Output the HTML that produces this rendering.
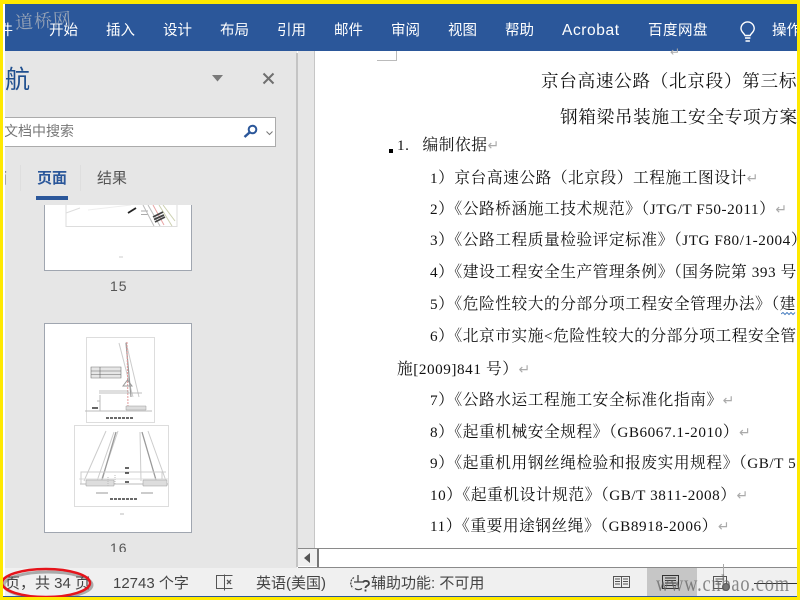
<!DOCTYPE html>
<html><head><meta charset="utf-8">
<style>
html,body{margin:0;padding:0;width:800px;height:600px;overflow:hidden;background:#fff}
body{position:relative;font-family:"Liberation Sans","Noto Sans CJK SC",sans-serif}
div,span.a{position:absolute}
.t{position:absolute;white-space:nowrap;line-height:20px}
.tab{color:#fff;font-size:14.5px;top:21px}
.d{font-family:"Liberation Serif","Noto Serif CJK SC",serif;font-size:15.7px;color:#111;letter-spacing:.55px;z-index:1}
.l{font-size:15.2px}
.r{color:#aaa;font-size:14px;font-family:"Liberation Sans",sans-serif;letter-spacing:0}
.s{font-size:15px;color:#444;top:574px}
</style></head><body>
<div style="left:0;top:0;width:800px;height:600px;background:#fff"></div>
<!-- ribbon -->
<div style="left:5px;top:4px;width:792px;height:47px;background:#2B579A"></div>
<!-- nav pane -->
<div style="left:5px;top:51px;width:292px;height:519px;background:#E6E6E6"></div>
<div style="left:296px;top:53px;width:2px;height:514px;background:#C4C4C4"></div>
<div style="left:298px;top:51px;width:17px;height:497px;background:#E6E6E6"></div>
<div style="left:314px;top:51px;width:1px;height:497px;background:#C6C6C6"></div>
<div style="left:298px;top:548px;width:499px;height:1px;background:#8a8a8a"></div>
<div style="left:298px;top:549px;width:499px;height:17px;background:#fff"></div>
<div style="left:298px;top:549px;width:19px;height:17px;background:#F0F0F0"></div>
<div style="left:317px;top:549px;width:2px;height:18px;background:#777"></div>
<div style="left:298px;top:567px;width:499px;height:1px;background:#8a8a8a"></div>
<svg style="position:absolute;left:304px;top:553px" width="8" height="10"><path d="M6 0V10L0 5Z" fill="#555"/></svg>

<!-- status -->
<div style="left:5px;top:568px;width:792px;height:28px;background:#F0F0F0"></div>
<div style="left:0;top:596px;width:800px;height:1px;background:#2B579A"></div>
<div style="left:647px;top:568px;width:50px;height:28px;background:#C6C6C6"></div>

<!-- yellow frame -->
<div style="left:0;top:0;width:800px;height:4px;background:#FFE900;z-index:9"></div>
<div style="left:0;top:0;width:3px;height:600px;background:#FFE900;z-index:9"></div>
<div style="left:797px;top:0;width:3px;height:600px;background:#FFE900;z-index:9"></div>
<div style="left:0;top:597px;width:800px;height:3px;background:#FFE900;z-index:9"></div>

<!-- tabs -->
<span class="t tab" style="left:-16px">文件</span>
<span class="t tab" style="left:49px">开始</span>
<span class="t tab" style="left:106px">插入</span>
<span class="t tab" style="left:163px">设计</span>
<span class="t tab" style="left:220px">布局</span>
<span class="t tab" style="left:277px">引用</span>
<span class="t tab" style="left:334px">邮件</span>
<span class="t tab" style="left:391px">审阅</span>
<span class="t tab" style="left:448px">视图</span>
<span class="t tab" style="left:505px">帮助</span>
<span class="t tab" style="left:562px;font-size:15.5px;letter-spacing:.6px">Acrobat</span>
<span class="t tab" style="left:648px;letter-spacing:.5px">百度网盘</span>
<span class="t tab" style="left:772px;width:25px;overflow:hidden">操作</span>
<svg style="position:absolute;left:739px;top:21px" width="18" height="22" fill="none" stroke="#fff" stroke-width="1.4"><path d="M6 14.5C5.500 12.5 2 11 2 7.500A6.600 6.600 0 0 1 15.200 7.500C15.200 11 11.800 12.500 11.200 14.500Z"/><path d="M6 17H11.400M6.500 20H10.900" stroke-width="1.600"/></svg>
<span class="t" style="left:15px;top:10px;font-size:18px;letter-spacing:1px;color:#95a2b6;font-family:'Noto Serif CJK SC',serif;transform:rotate(-4deg);z-index:3">道桥网</span>

<!-- nav heading -->
<span class="t" style="left:5px;top:68px;font-size:25px;line-height:25px;color:#1F4F8F">航</span>
<svg style="position:absolute;left:212px;top:75px" width="12" height="8"><path d="M0 0H11L5.500 6.500Z" fill="#7a7a7a"/></svg>
<svg style="position:absolute;left:262px;top:72px" width="14" height="14" stroke="#6f6f6f" stroke-width="2"><path d="M1.500 1.500L11.500 11.500M11.500 1.500L1.500 11.500"/></svg>

<!-- search -->
<div style="left:5px;top:117px;width:270px;height:28px;background:#fff;border:1px solid #ABABAB;border-left:0"></div>
<span class="t" style="left:5px;top:121px;width:70px;overflow:hidden;font-size:14px;color:#777"><span style="margin-left:-1px">文档中搜索</span></span>
<svg style="position:absolute;left:243px;top:123px" width="16" height="16" fill="none" stroke="#2B579A"><circle cx="9.500" cy="6.500" r="3.800" stroke-width="2"/><path d="M6.500 9.500L1.500 14" stroke-width="2.500"/></svg>
<svg style="position:absolute;left:266px;top:131px" width="7" height="5" fill="none" stroke="#777"><path d="M.5 .5L3.500 3.500L6.500 .5"/></svg>

<!-- nav tabs -->
<span class="t" style="left:-8px;top:169px;font-size:15px;color:#555;clip-path:inset(0 0 0 13px)">面</span>
<span class="t" style="left:37px;top:169px;font-size:15px;font-weight:bold;color:#2B579A">页面</span>
<span class="t" style="left:97px;top:169px;font-size:15px;color:#555">结果</span>
<div style="left:20px;top:165px;width:1px;height:26px;background:#dedede"></div>
<div style="left:80px;top:165px;width:1px;height:26px;background:#dedede"></div>
<div style="left:36px;top:196px;width:32px;height:4px;background:#2B579A"></div>

<!-- thumbnails -->
<svg style="position:absolute;left:44px;top:205px" width="148" height="66">
<rect x=".5" y="-3" width="147" height="68.500" fill="#fff" stroke="#A0A6B0"/>
<path d="M22 0V21.500H133V0" fill="none" stroke="#ddd"/>
<path d="M22 8L36 3" stroke="#ddd"/>
<path d="M44 5L87 0" stroke="#eee"/>
<path d="M84 8L92 3" stroke="#222" stroke-width="1.800"/>
<path d="M97 6H104M97 9.500H104" stroke="#aaa"/>
<path d="M99 0L110 21M104 0L116 21" stroke="#bbb" fill="none"/>
<path d="M109 0L120 20" stroke="#e8a5a5"/>
<path d="M115 0L128 21M119 0L131 16" stroke="#ccd0b0"/>
<path d="M109 12L119 7M110 14.500L120 10M111 17L121 12" stroke="#444" stroke-width="1.800"/>
<path d="M75 52H79" stroke="#ccc"/>
</svg>
<span class="t" style="left:110px;top:276px;font-size:14px;letter-spacing:1px;color:#555">15</span>
<svg style="position:absolute;left:44px;top:323px" width="148" height="210">
<rect x=".5" y=".5" width="147" height="209" fill="#fff" stroke="#A0A6B0"/>
<rect x="42.500" y="14.500" width="68" height="85" fill="none" stroke="#ddd"/>
<rect x="30.500" y="102.500" width="94" height="81" fill="none" stroke="#ddd"/>
<!-- crane 1 -->
<path d="M82 19L95 74M75 20L89 74" stroke="#ccc" fill="none"/>
<path d="M82 20L87 74" stroke="#999" stroke-width="1.200"/>
<path d="M83 19L84 85" stroke="#e39a9a" stroke-dasharray="2 1"/>
<path d="M47 44H77V55H47Z" fill="#e6e6e6" stroke="#777" stroke-width=".6"/>
<path d="M47 48H77M47 51.500H77M56 44V55" stroke="#666" stroke-width=".6"/>
<path d="M55 68H84V70H55M70 70H98" stroke="#aaa" stroke-width=".8" fill="none"/>
<path d="M79 63H88L83.500 57Z" fill="none" stroke="#999"/>
<path d="M41 88H108" stroke="#bbb"/>
<path d="M56 72V88M56 78H53" stroke="#bbb"/>
<path d="M82 83H102V87H82Z" fill="#ddd" stroke="#999" stroke-width=".5"/>
<path d="M48 85H54" stroke="#333" stroke-width="1.500"/>
<path d="M62 95H90" stroke="#555" stroke-width="1.800" stroke-dasharray="3 1"/>
<!-- crane 2 -->
<path d="M62 108L40 158M70 109L53 158M74 108L57 158" stroke="#ccc" fill="none"/>
<path d="M72 109L58 157" stroke="#999" stroke-width="1.300"/>
<path d="M98 109L112 157" stroke="#999" stroke-width="1.300"/>
<path d="M104 108L122 158M96 109L97 158" stroke="#ccc" fill="none"/>
<path d="M36 161H124" stroke="#bbb"/>
<path d="M35 156H124" stroke="#ddd"/>
<path d="M37 161V149H118V156M37 149H122" stroke="#ccc" fill="none"/>
<path d="M42 157H70V163H42Z" fill="#ddd" stroke="#999" stroke-width=".5"/>
<path d="M99 157H123V163H99Z" fill="#ddd" stroke="#999" stroke-width=".5"/>
<path d="M64 154V163M71 152V161" stroke="#bbb" stroke-dasharray="1 1"/>
<path d="M81 145H85M81 150H85M81 159H85" stroke="#333" stroke-width="1.500"/>
<path d="M52 170H64M97 170H109" stroke="#999"/>
<path d="M66 176H94" stroke="#555" stroke-width="1.800" stroke-dasharray="3 1"/>
<path d="M76 191H80" stroke="#bbb"/>
</svg>
<span class="t" style="left:110px;top:538px;height:14px;overflow:hidden;font-size:14px;letter-spacing:1px;color:#555">16</span>

<!-- doc -->
<div style="left:377px;top:51px;width:20px;height:10px;border-right:1px solid #bbb;border-bottom:1px solid #bbb;box-sizing:border-box"></div>
<span class="t r" style="left:670px;top:42px;font-size:12px">↵</span>
<div style="left:389px;top:149px;width:4px;height:4px;background:#000"></div>
<div style="position:absolute;left:315px;top:52px;width:482px;height:496px;overflow:hidden">
<span class="t d" style="left:226px;top:19px;font-size:17.6px;letter-spacing:.7px">京台高速公路（北京段）第三标</span>
<span class="t d" style="left:245px;top:55px;font-size:17.6px;letter-spacing:.7px">钢箱梁吊装施工安全专项方案</span>
<span class="t d" style="left:82px;top:83px"><span class="l">1.&nbsp;&nbsp;&nbsp;</span>编制依据<span class="r">↵</span></span>
<span class="t d" style="left:115px;top:116px"><span class="l">1</span>）京台高速公路（北京段）工程施工图设计<span class="r">↵</span></span>
<span class="t d" style="left:115px;top:147px"><span class="l">2</span>）《公路桥涵施工技术规范》（<span class="l">JTG/T F50-2011</span>）<span class="r">↵</span></span>
<span class="t d" style="left:115px;top:179px"><span class="l">3</span>）《公路工程质量检验评定标准》（<span class="l">JTG F80/1-2004</span>）</span>
<span class="t d" style="left:115px;top:211px"><span class="l">4</span>）《建设工程安全生产管理条例》（国务院第 <span class="l">393</span> 号</span>
<span class="t d" style="left:115px;top:243px"><span class="l">5</span>）《危险性较大的分部分项工程安全管理办法》（建</span>
<span class="t d" style="left:115px;top:275px"><span class="l">6</span>）《北京市实施<span class="l">&lt;</span>危险性较大的分部分项工程安全管</span>
<span class="t d" style="left:82px;top:307px">施<span class="l">[2009]841</span> 号）<span class="r">↵</span></span>
<span class="t d" style="left:115px;top:338px"><span class="l">7</span>）《公路水运工程施工安全标准化指南》<span class="r">↵</span></span>
<span class="t d" style="left:115px;top:370px"><span class="l">8</span>）《起重机械安全规程》（<span class="l">GB6067.1-2010</span>）<span class="r">↵</span></span>
<span class="t d" style="left:115px;top:402px"><span class="l">9</span>）《起重机用钢丝绳检验和报废实用规程》（<span class="l">GB/T 5</span></span>
<span class="t d" style="left:115px;top:433px"><span class="l">10</span>）《起重机设计规范》（<span class="l">GB/T 3811-2008</span>）<span class="r">↵</span></span>
<span class="t d" style="left:115px;top:464px"><span class="l">11</span>）《重要用途钢丝绳》（<span class="l">GB8918-2006</span>）<span class="r">↵</span></span>
</div>
<svg style="position:absolute;left:781px;top:312px;z-index:2" width="16" height="4"><path d="M0 2L2 .5L4 2.500L6 .5L8 2.500L10 .5L12 2.500L14 .5" stroke="#4a7fc0" fill="none"/></svg>

<!-- status text -->
<span class="t s" style="left:5px;width:85px;overflow:hidden">页，共 34 页</span>
<span class="t s" style="left:113px">12743 个字</span>
<svg style="position:absolute;left:216px;top:574px" width="18" height="17" fill="none" stroke="#555"><path d="M.5 1.500H8.500V14.500H.5ZM8.500 .5V16.500M8.500 1.500H16.500M8.500 14.500H16.500" /><path d="M11 6L15 10M15 6L11 10" stroke-width="1.300"/></svg>
<span class="t s" style="left:256px">英语(美国)</span>
<svg style="position:absolute;left:349px;top:574px" width="22" height="18" fill="none" stroke="#444" stroke-width="1.300"><path d="M5 3.500A6.500 6.500 0 0 0 4 14" stroke-dasharray="2 1"/><path d="M9 1V8H5M9 8H14"/><path d="M14 8.500C15 6 20 6.500 20 9.500C20 12 16.500 11.500 16.500 14" stroke-width="1.800"/><path d="M16.500 15.500V17.500" stroke-width="1.800"/><path d="M6 14.500C8 16 11 16 13 14.500"/></svg>
<span class="t s" style="left:371px">辅助功能: 不可用</span>
<svg style="position:absolute;left:613px;top:575px" width="18" height="15" fill="none" stroke="#555"><path d="M.5 1.500H8.500V12.500H.5ZM8.500 1.500H16.500V12.500H8.500ZM2 4H7M2 6.500H7M2 9H7M10 4H15M10 6.500H15M10 9H15"/></svg>
<svg style="position:absolute;left:662px;top:575px" width="18" height="15" fill="none" stroke="#333"><rect x=".5" y=".5" width="16" height="13"/><path d="M3 3H14M3 5.500H14M3 8H14M3 10.500H14" /></svg>
<svg style="position:absolute;left:713px;top:576px" width="18" height="16" fill="none" stroke="#555"><rect x=".5" y=".5" width="13" height="12"/><path d="M2.500 3H11M2.500 5.500H9M2.500 8H8"/><circle cx="13" cy="11" r="3.500" fill="#777"/></svg>
<div style="left:723px;top:564px;width:1px;height:11px;background:#aaa"></div>
<div style="left:754px;top:583px;width:43px;height:1px;background:#333"></div>
<span class="t" style="left:656px;top:572px;font-family:'Liberation Serif',serif;font-size:23px;line-height:24px;color:rgba(100,100,100,.75);letter-spacing:1px;transform:scaleX(.8);transform-origin:left;z-index:5">www.cnbao.com</span>

<!-- red ellipse -->
<svg style="position:absolute;left:0;top:565px;z-index:6" width="100" height="35" fill="none"><ellipse cx="48" cy="20" rx="44" ry="13" stroke="#555" stroke-width="3" opacity=".45"/><ellipse cx="46" cy="18" rx="44" ry="14" stroke="#E5141B" stroke-width="2.500"/></svg>
</body></html>
